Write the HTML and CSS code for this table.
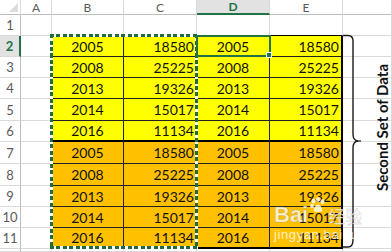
FILE: index.html
```html
<!DOCTYPE html>
<html>
<head>
<meta charset="utf-8">
<link rel="stylesheet" href="styles.css">
</head>
<body>
<div class="wrap">
  <div class="sheet">
    <div class="corner"><span class="tri"></span></div>
    <div class="ch">A</div><div class="ch">B</div><div class="ch">C</div><div class="ch sel">D</div><div class="ch">E</div><div class="ch"></div>

    <div class="rh">1</div>
    <div class="c"></div><div class="c top"></div><div class="c top"></div><div class="c top"></div><div class="c top"></div><div class="c"></div>

    <div class="rh act">2</div>
    <div class="c lft"></div><div class="d y">2005</div><div class="d y n">18580</div><div class="d y">2005</div><div class="d y n re">18580</div><div class="c"></div>
    <div class="rh">3</div>
    <div class="c lft"></div><div class="d y">2008</div><div class="d y n">25225</div><div class="d y">2008</div><div class="d y n re">25225</div><div class="c"></div>
    <div class="rh">4</div>
    <div class="c lft"></div><div class="d y">2013</div><div class="d y n">19326</div><div class="d y">2013</div><div class="d y n re">19326</div><div class="c"></div>
    <div class="rh">5</div>
    <div class="c lft"></div><div class="d y">2014</div><div class="d y n">15017</div><div class="d y">2014</div><div class="d y n re">15017</div><div class="c"></div>
    <div class="rh">6</div>
    <div class="c lft"></div><div class="d y th">2016</div><div class="d y n th">11134</div><div class="d y th">2016</div><div class="d y n re th">11134</div><div class="c"></div>

    <div class="rh">7</div>
    <div class="c lft"></div><div class="d o">2005</div><div class="d o n">18580</div><div class="d o">2005</div><div class="d o n re">18580</div><div class="c"></div>
    <div class="rh">8</div>
    <div class="c lft"></div><div class="d o">2008</div><div class="d o n">25225</div><div class="d o">2008</div><div class="d o n re">25225</div><div class="c"></div>
    <div class="rh">9</div>
    <div class="c lft"></div><div class="d o">2013</div><div class="d o n">19326</div><div class="d o">2013</div><div class="d o n re">19326</div><div class="c"></div>
    <div class="rh">10</div>
    <div class="c lft"></div><div class="d o">2014</div><div class="d o n">15017</div><div class="d o">2014</div><div class="d o n re">15017</div><div class="c"></div>
    <div class="rh">11</div>
    <div class="c lft"></div><div class="d o th">2016</div><div class="d o n th">11134</div><div class="d o th">2016</div><div class="d o n re th">11134</div><div class="c"></div>

    <div class="rh"></div>
    <div class="c"></div><div class="c"></div><div class="c"></div><div class="c"></div><div class="c"></div><div class="c"></div>
  </div>

  <div class="ants"></div>
  <div class="active"><span class="handle"></span></div>

  <svg class="brace" width="30" height="224" viewBox="0 0 30 224">
    <path d="M2 3.5 H7 Q12 3.5 12 9 V102 Q12 108.5 17 109 Q12 109.5 12 116 V208 Q12 215 7 215 H2" fill="none" stroke="#1a1a1a" stroke-width="1.4"/>
    <path d="M17 109 H20" stroke="#1a1a1a" stroke-width="1.2"/>
  </svg>
  <div class="label">Second Set of Data</div>

  <div class="wm">
    <div class="wm-top"><span class="bai">Bai</span><svg class="paw" width="17" height="16" viewBox="0 0 16 16"><ellipse cx="4" cy="4" rx="2" ry="2.6"/><ellipse cx="8.5" cy="2.6" rx="2" ry="2.4"/><ellipse cx="13" cy="4.5" rx="2" ry="2.6"/><ellipse cx="2.5" cy="9" rx="1.8" ry="2.2"/><path d="M4 14 Q5 8 8.5 7.5 Q12 8 13 14 Q8.5 16 4 14 Z"/></svg><span class="jy">经验</span></div>
    <div class="wm-url">jingyan.baidu.com</div>
  </div>
</div>
</body>
</html>
```

FILE: styles.css
```css
html, body {
  margin: 0;
  padding: 0;
  background: #fff;
}
.wrap {
  position: relative;
  width: 392px;
  height: 252px;
  overflow: hidden;
  font-family: Lato, "Liberation Sans", sans-serif;
}
.sheet {
  display: grid;
  grid-template-columns: 21px 31px 72px 73px 73px 73px 1fr;
  grid-template-rows: 15px 21px 21px 21px 21px 22px 21px 22px 22px 21px 21px 21px 1fr;
  width: 392px;
  height: 252px;
}
.sheet > div {
  box-sizing: border-box;
  border-right: 1px solid #d9d9d9;
  border-bottom: 1px solid #d9d9d9;
  display: flex;
  align-items: center;
  justify-content: center;
  overflow: hidden;
  white-space: nowrap;
}
.corner {
  position: relative;
  background: #fff;
  border-bottom-color: #bdbdbd !important;
}
.tri {
  position: absolute;
  right: 2px;
  bottom: 2px;
  width: 0;
  height: 0;
  border-left: 9px solid transparent;
  border-bottom: 9px solid #dcdcdc;
}
.ch {
  background: #fff;
  color: #5a5a5a;
  font-size: 12px;
  border-bottom-color: #bdbdbd !important;
}
.ch.sel {
  background: #e2e2e2;
  color: #217346;
  font-weight: bold;
  border-bottom: 2px solid #217346 !important;
}
.rh {
  background: #fff;
  color: #5a5a5a;
  font-size: 13px;
  border-right-color: #bdbdbd !important;
}
.rh.act {
  background: #e2e2e2;
  color: #217346;
  font-weight: bold;
  border-right: 2px solid #217346 !important;
}
.c {
  background: #fff;
}
.c.top {
  border-bottom-color: #000 !important;
}
.c.lft {
  border-right-color: #000 !important;
}
.d {
  font-size: 14px;
  color: #111;
  border-right-color: #222 !important;
  border-bottom-color: #222 !important;
}
.y {
  background: #ffff00;
}
.o {
  background: #ffc000;
}
.n {
  justify-content: flex-end !important;
  padding-right: 2px;
}
.re {
  border-right: 2px solid #000 !important;
}
.th {
  border-bottom: 2px solid #000 !important;
}
.ants {
  position: absolute;
  left: 50px;
  top: 34px;
  width: 148px;
  height: 215px;
  box-sizing: border-box;
  background:
    repeating-linear-gradient(90deg, #1f6b3f 0 4px, #fff 4px 6.5px) left top / 100% 3px no-repeat,
    repeating-linear-gradient(90deg, #1f6b3f 0 4px, #fff 4px 6.5px) left bottom / 100% 3px no-repeat,
    repeating-linear-gradient(180deg, #1f6b3f 0 4px, #fff 4px 6.5px) left top / 3px 100% no-repeat,
    repeating-linear-gradient(180deg, #1f6b3f 0 4px, #fff 4px 6.5px) right top / 3px 100% no-repeat;
}
.active {
  position: absolute;
  left: 196px;
  top: 35px;
  width: 75px;
  height: 22px;
  box-sizing: border-box;
  border: 2px solid #217346;
}
.handle {
  position: absolute;
  right: -3px;
  bottom: -3px;
  width: 4px;
  height: 4px;
  background: #217346;
  border: 1px solid #fff;
}
.brace {
  position: absolute;
  left: 341px;
  top: 32px;
}
.label {
  position: absolute;
  left: 373px;
  top: 45px;
  height: 166px;
  width: 18px;
  writing-mode: vertical-rl;
  transform: rotate(180deg);
  text-align: center;
  font-weight: bold;
  font-size: 15px;
  color: #111;
  line-height: 18px;
  white-space: nowrap;
}
.wm {
  position: absolute;
  left: 274px;
  top: 196px;
  color: rgba(255, 255, 255, 0.8);
}
.wm-top {
  display: flex;
  align-items: flex-end;
  height: 31px;
}
.bai {
  font-family: "Liberation Sans", sans-serif;
  font-weight: bold;
  font-size: 22px;
  line-height: 24px;
  -webkit-text-stroke: 0.5px rgba(120, 120, 120, 0.5);
}
.paw {
  fill: rgba(255, 255, 255, 0.8);
  align-self: flex-start;
  margin: 1px 2px 0 1px;
}
.jy {
  font-family: "Noto Sans CJK SC", sans-serif;
  font-size: 17px;
  line-height: 22px;
  -webkit-text-stroke: 0.3px rgba(120, 120, 120, 0.5);
}
.wm-url {
  font-family: "Liberation Sans", sans-serif;
  font-size: 13px;
  line-height: 14px;
  margin-top: 1px;
  letter-spacing: 0.6px;
}
```
